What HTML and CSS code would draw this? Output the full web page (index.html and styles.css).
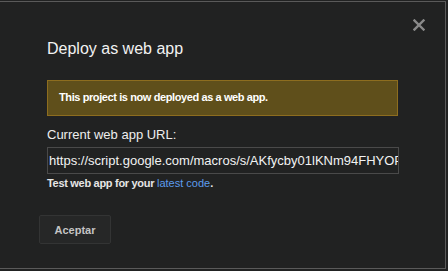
FILE: index.html
```html
<!DOCTYPE HTML>
<html lang="en">
<head>
    <meta charset="UTF-8">
    <title>Deploy as web app</title>
    <link rel="stylesheet" href="styles.css">
</head>
<body>
    <div class="dialog">
        <button class="close" aria-label="Close">
            <svg width="12" height="12" viewBox="0 0 12 12">
                <path d="M1.5 1.5 L10.5 10.5 M10.5 1.5 L1.5 10.5" stroke="#8a8a8a" stroke-width="2.4" stroke-linecap="square"/>
            </svg>
        </button>

        <h1 class="title">Deploy as web app</h1>

        <div class="notice">This project is now deployed as a web app.</div>

        <label class="label" for="appUrl">Current web app URL:</label>
        <input class="url" id="appUrl" type="text" readonly
               value="https://script.google.com/macros/s/AKfycby01lKNm94FHYOPq2dRz7Xw/exec">
        <p class="hint">Test web app for your <a href="#">latest code</a>.</p>

        <div class="actions">
            <button class="btn">Aceptar</button>
        </div>
    </div>
</body>
</html>
```

FILE: styles.css
```css
/* Page */
body {
    margin: 0;
    background-color: #212222;
    font-family: "Liberation Sans", Arial, sans-serif;
    overflow: hidden;
}

/* Dialog frame */
.dialog {
    position: relative;
    box-sizing: border-box;
    width: 447px;
    height: 268px;
    margin: 1px 0 0 -1px;
    padding: 38px 0 0 47px;
    border: 1px solid #5a5a5a;
    background-color: #212222;
}

.close {
    position: absolute;
    top: 17px;
    right: 20px;
    padding: 0;
    border: none;
    background: none;
    line-height: 0;
    cursor: pointer;
}

/* Header */
.title {
    margin: 0;
    font-size: 16px;
    font-weight: normal;
    line-height: 18px;
    color: #f2f2f2;
}

/* Success banner */
.notice {
    box-sizing: border-box;
    width: 351px;
    margin-top: 22px;
    padding: 10px 11px 11px;
    border: 1px solid #8d6d1f;
    background-color: #5f4f1b;
    color: #ffffff;
    font-size: 11px;
    font-weight: bold;
    line-height: 13px;
    letter-spacing: -0.4px;
}

/* URL field */
.label {
    display: block;
    margin-top: 11px;
    font-size: 13px;
    line-height: 15px;
    color: #eeeeee;
}

.url {
    display: block;
    box-sizing: border-box;
    width: 352px;
    height: 27px;
    margin: 5px 0 0;
    padding: 0 0 0 1px;
    border: 1px solid #4a4a4a;
    background-color: #212222;
    color: #f2f2f2;
    font-family: "Liberation Sans", Arial, sans-serif;
    font-size: 13px;
    outline: none;
}

.hint {
    margin: 3px 0 0;
    font-size: 11px;
    font-weight: bold;
    line-height: 13px;
    letter-spacing: -0.3px;
    color: #e6e6e6;
}

.hint a {
    color: #5d9cec;
    font-weight: normal;
    letter-spacing: 0;
    text-decoration: none;
}

/* Footer buttons */
.actions {
    margin: 25px 0 0 -8px;
}

.btn {
    box-sizing: border-box;
    width: 72px;
    height: 29px;
    padding: 0;
    border: 1px solid #333434;
    border-radius: 2px;
    background-color: #262727;
    color: #c4c4c4;
    font-family: "Liberation Sans", Arial, sans-serif;
    font-size: 11px;
    font-weight: bold;
    cursor: pointer;
}
```
